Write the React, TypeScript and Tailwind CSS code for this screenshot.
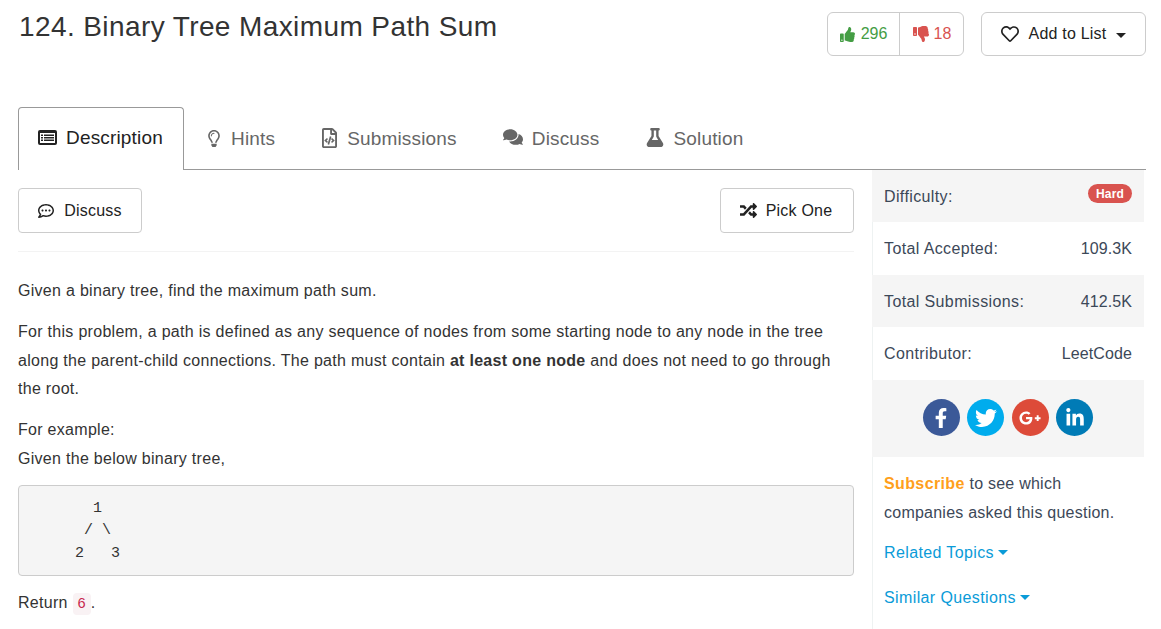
import {
  FaComments,
  FaFacebookF,
  FaFlask,
  FaGooglePlusG,
  FaLinkedinIn,
  FaRandom,
  FaRegCommentDots,
  FaRegFileCode,
  FaRegHeart,
  FaRegLightbulb,
  FaThumbsDown,
  FaThumbsUp,
  FaTwitter,
} from "react-icons/fa";

const tabs = [
  { label: "Hints", Icon: FaRegLightbulb, cls: "ml-[2px] pl-[22px] pr-[23px] gap-[11px]", icon: "h-[17px] w-[12px] mt-[3px]" },
  { label: "Submissions", Icon: FaRegFileCode, cls: "pl-[23px] pr-[23px] gap-[9px]", icon: "h-[20px] w-[17px] mt-px" },
  { label: "Discuss", Icon: FaComments, cls: "pl-[23px] pr-[24px] gap-[9px]", icon: "h-[20px] w-[20px]" },
  { label: "Solution", Icon: FaFlask, cls: "pl-[23px] pr-[22px] gap-[9px]", icon: "h-[19px] w-[18px] mt-px" },
];

const stats = [
  { label: "Total Accepted:", value: "109.3K", shade: false, h: "h-[53px]" },
  { label: "Total Submissions:", value: "412.5K", shade: true, h: "h-[52px] pt-[1px] -ml-px" },
  { label: "Contributor:", value: "LeetCode", shade: false, h: "h-[53px]" },
];

const social = [
  { Icon: FaFacebookF, bg: "bg-[#3b5998]", size: 20 },
  { Icon: FaTwitter, bg: "bg-[#00aced]", size: 22 },
  { Icon: FaGooglePlusG, bg: "bg-[#dd4b39]", size: 22 },
  { Icon: FaLinkedinIn, bg: "bg-[#007bb6]", size: 20 },
];

function Caret({ color }: { color: string }) {
  return (
    <svg width="10" height="5" viewBox="0 0 10 5" aria-hidden="true">
      <path d="M0 0 L10 0 L5 5 Z" fill={color} />
    </svg>
  );
}

function ListAlt() {
  return (
    <svg width="19" height="15" viewBox="0 0 19 15" className="mt-[4px] shrink-0" aria-hidden="true">
      <rect width="19" height="15" rx="2" fill="#222" />
      <rect x="2" y="3" width="15" height="10" fill="#fff" />
      {[4.5, 7, 9.5].map((y) => (
        <g key={y}>
          <rect x="3" y={y} width="2" height="1.5" fill="#222" />
          <rect x="6" y={y} width="10" height="1.5" fill="#222" />
        </g>
      ))}
    </svg>
  );
}

export default function App() {
  return (
    <div className="h-[629px] w-[1161px] overflow-hidden bg-white pl-[18px] pr-[15px] font-['Liberation_Sans',Arial,sans-serif] text-[16px] text-[#333]">
      <header className="flex h-[107px] items-start">
        <h1 className="pt-[7px] pl-px text-[28px] leading-[40px] font-normal tracking-[0.4px] text-[#333]">
          124. Binary Tree Maximum Path Sum
        </h1>
        <div className="ml-auto flex pt-[12px]">
          <div className="flex h-[44px] w-[137px] rounded-[6px] border border-[#ccc]">
            <span className="flex w-[72px] items-center justify-center gap-[6px] border-r border-[#ccc] text-[#449d44]">
              <FaThumbsUp size={15} />
              296
            </span>
            <span className="flex flex-1 items-center justify-center gap-[5px] pl-px text-[#d9534f]">
              <FaThumbsDown size={16} />
              18
            </span>
          </div>
          <button className="ml-[17px] flex h-[44px] w-[165px] items-center justify-center rounded-[6px] border border-[#ccc] tracking-[0.2px] text-[#222]">
            <FaRegHeart size={18} />
            <span className="ml-[10px]">Add to List</span>
            <span className="ml-[10px] pt-[2px]">
              <Caret color="#222" />
            </span>
          </button>
        </div>
      </header>

      <nav className="flex h-[63px] border-b border-[#999] text-[19px] leading-[24px] tracking-[0.17px]">
        <div className="-mb-px flex h-[63px] w-[166px] items-start gap-[9px] rounded-t-[4px] border border-b-0 border-[#999] bg-white pt-[18px] pl-[19px] text-[#222]">
          <ListAlt />
          Description
        </div>
        {tabs.map(({ label, Icon, cls, icon }) => (
          <div key={label} className={`flex items-start pt-[20px] text-[#666] ${cls}`}>
            <Icon className={icon} />
            {label}
          </div>
        ))}
      </nav>

      <div className="flex">
        <main className="w-[836px]">
          <div className="flex justify-between border-b border-[#f3f3f3] pt-[18px] pb-[18px] tracking-[0.2px]">
            <button className="flex h-[45px] w-[124px] items-center justify-center gap-[10px] rounded-[4px] border border-[#ccc] text-[#222]">
              <FaRegCommentDots size={16} />
              Discuss
            </button>
            <button className="flex h-[45px] w-[134px] items-center justify-center gap-[9px] rounded-[4px] border border-[#ccc] pr-[2px] text-[#222]">
              <FaRandom size={17} />
              Pick One
            </button>
          </div>
          <div className="pt-[25px] leading-[28.8px] tracking-[0.29px]">
            <p>Given a binary tree, find the maximum path sum.</p>
            <p className="mt-[12px]">
              For this problem, a path is defined as any sequence of nodes from some starting node to any node in the tree along the parent-child connections. The path must contain <b>at least one node</b> and does not need to go through the root.
            </p>
            <p className="mt-[12px]">
              For example:
              <br />
              Given the below binary tree,
            </p>
            <pre className="mt-[11px] h-[91px] rounded-[4px] border border-[#ccc] bg-[#f5f5f5] pt-[12px] pl-[11px] font-['Liberation_Mono',monospace] text-[15px] leading-[22.5px] tracking-normal text-[#333]">
{"       1\n      / \\\n     2   3"}
            </pre>
            <p className="mt-[13px]">
              Return <code className="rounded-[4px] bg-[#f9f2f4] px-[4.8px] py-[3.2px] font-['Liberation_Mono',monospace] text-[14.4px] tracking-normal text-[#c7254e]">6</code>.
            </p>
          </div>
        </main>

        <aside className="ml-[18px] h-[460px] w-[272px] border-l border-[#eef2f2] tracking-[0.38px] text-[#3c4858]">
          <div className="-ml-px flex h-[52px] justify-between bg-[#f5f5f5] pt-[14px] pr-[12px] pl-[12px]">
            <span className="pt-px leading-[24px]">Difficulty:</span>
            <span className="h-[19px] w-[44px] rounded-[10px] bg-[#d9534f] text-center text-[12px] leading-[20px] font-bold tracking-[0.2px] text-white">Hard</span>
          </div>
          {stats.map((s) => (
            <div key={s.label} className={`flex items-center justify-between pr-[12px] ${s.shade ? "bg-[#f5f5f5] pl-[12px]" : "bg-white pl-[11px]"} ${s.h}`}>
              <span>{s.label}</span>
              <span className="tracking-[0.1px]">{s.value}</span>
            </div>
          ))}
          <div className="-ml-px flex h-[77px] items-start justify-center gap-[7.5px] bg-[#f5f5f5] pt-[19px]">
            {social.map(({ Icon, bg, size }, i) => (
              <span key={i} className={`flex h-[37px] w-[37px] items-center justify-center rounded-full text-white ${bg}`}>
                <Icon size={size} />
              </span>
            ))}
          </div>
          <div className="pt-[12px] pl-[11px] leading-[29px]">
            <p className="tracking-[0.24px]">
              <b className="tracking-[0.38px] text-[#ff9f1c]">Subscribe</b> to see which companies asked this question.
            </p>
            <div className="mt-[11px] flex items-center gap-[4px] text-[#0a9bd8]">
              Related Topics <Caret color="#0a9bd8" />
            </div>
            <div className="mt-[16px] flex items-center gap-[4px] text-[#0a9bd8]">
              Similar Questions <Caret color="#0a9bd8" />
            </div>
          </div>
        </aside>
      </div>
    </div>
  );
}
